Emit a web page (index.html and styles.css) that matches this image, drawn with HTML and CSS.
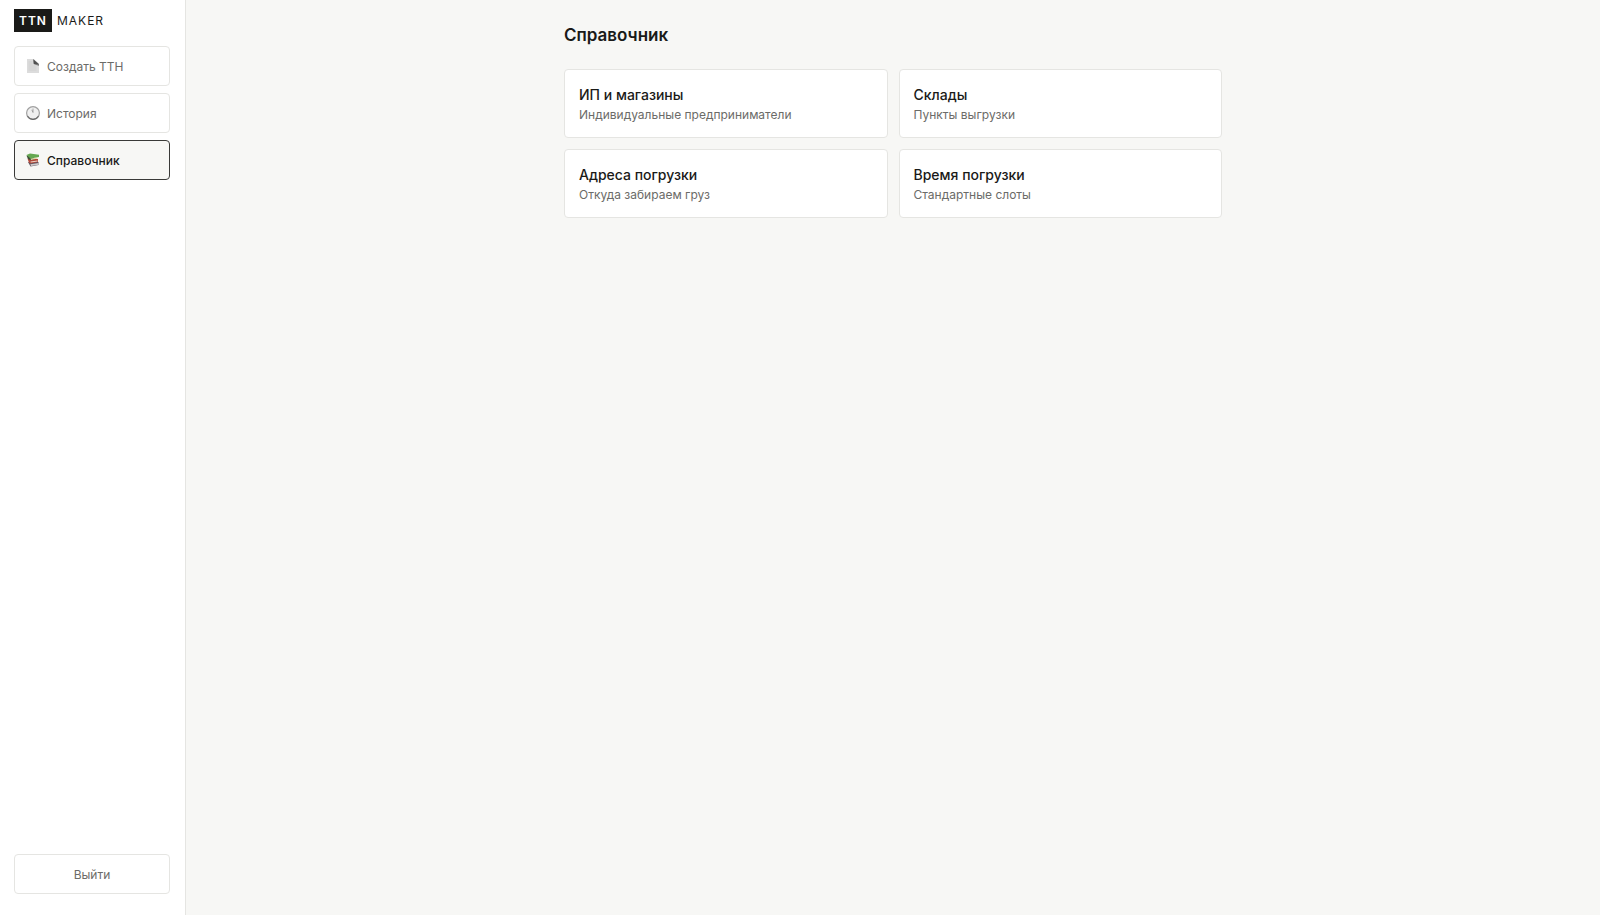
FILE: index.html
```html
<!DOCTYPE html>
<html lang="ru">
<head>
<meta charset="utf-8">
<meta name="viewport" content="width=device-width, initial-scale=1">
<title>TTN Maker</title>
<link rel="stylesheet" href="styles.css">
</head>
<body>

<aside class="sidebar">
  <a class="logo" href="#"><span class="logo-mark">TTN</span><span class="logo-text">MAKER</span></a>

  <nav class="nav">
    <button class="btn" type="button">
      <svg class="icon" viewBox="0 0 14 14" aria-hidden="true">
        <path d="M1 0h7l5 5v9H1z" fill="#dcdcdc"/>
        <path d="M2.500 3h4M2.500 5h4M2.500 7h8M2.500 9h8M2.500 11h8" stroke="#c9c9c9" stroke-width=".6"/>
        <path d="M7 0l6 5v2L7.500 5z" fill="#8a8a8a"/>
        <path d="M7.500.5L13 5.500 8 5z" fill="#505050"/>
      </svg>
      Создать ТТН
    </button>
    <button class="btn" type="button">
      <svg class="icon" viewBox="0 0 14 14" aria-hidden="true">
        <circle cx="7" cy="7" r="6.400" fill="#f0f0f0" stroke="#a0a0a0" stroke-width="1.200"/>
        <path d="M1.500 10.300a6.400 6.400 0 0 0 11 0" fill="none" stroke="#6c6c6c" stroke-width="1.200"/>
        <path d="M7 6.500V2.500M7 6.500L5.800 3.800" stroke="#8a8a8a" stroke-width=".7" fill="none"/>
      </svg>
      История
    </button>
    <button class="btn active" type="button">
      <svg class="icon" viewBox="0 0 14 14" aria-hidden="true">
        <path d="M2 9l2.500 4.500L12.500 12V9z" fill="#5d5560"/>
        <path d="M4.300 11.300l8.200-1.300v1.800L5 13z" fill="#cfc9cb"/>
        <path d="M1.500 5.500L3 9.800l1.500.7 7.500-1.500V6z" fill="#b3483a"/>
        <path d="M4.500 8.600l7-1.100v.9L4.700 9.600z" fill="#ecd2c4"/>
        <path d="M.5 2.500L2 6l2.500 1.200L8 6.500V4z" fill="#3d5038"/>
        <path d="M4.500 5.600L11.500 4.500v1L5 6.900z" fill="#e3d9a8"/>
        <path d="M.5 2L4 .5l9 1.200V4L4.500 5.500z" fill="#65a851"/>
      </svg>
      Справочник
    </button>
  </nav>

  <button class="btn logout" type="button">Выйти</button>
</aside>

<main class="main">
  <div class="content">
    <h1>Справочник</h1>
    <div class="cards">
      <a class="card" href="#">
        <span class="card-title">ИП и магазины</span>
        <span class="card-sub">Индивидуальные предприниматели</span>
      </a>
      <a class="card" href="#">
        <span class="card-title">Склады</span>
        <span class="card-sub">Пункты выгрузки</span>
      </a>
      <a class="card" href="#">
        <span class="card-title">Адреса погрузки</span>
        <span class="card-sub">Откуда забираем груз</span>
      </a>
      <a class="card" href="#">
        <span class="card-title">Время погрузки</span>
        <span class="card-sub">Стандартные слоты</span>
      </a>
    </div>
  </div>
</main>

</body>
</html>
```

FILE: styles.css
```css
* {
  box-sizing: border-box;
}

body {
  margin: 0;
  min-height: 100vh;
  display: flex;
  font-family: Inter, sans-serif;
  font-size: 12px;
  color: #1a1a18;
  background-color: #f7f7f5;
}

.sidebar {
  width: 186px;
  flex-shrink: 0;
  display: flex;
  flex-direction: column;
  padding: 9px 15px 21px 14px;
  background-color: #fff;
  border-right: 1px solid #e5e5e2;
}

.logo {
  display: flex;
  align-items: center;
  gap: 5px;
  margin-bottom: 14px;
  line-height: 23px;
  letter-spacing: 1px;
  color: #1a1a18;
  text-decoration: none;
}

.logo-mark {
  padding: 0 5px;
  font-weight: 600;
  color: #fff;
  background-color: #1a1a18;
}

.nav {
  display: flex;
  flex-direction: column;
  gap: 7px;
}

.btn {
  display: flex;
  align-items: center;
  gap: 7px;
  height: 40px;
  padding: 0 11px;
  border: 1px solid #e5e5e2;
  border-radius: 4px;
  font-family: inherit;
  font-size: 12px;
  color: #6b6b68;
  background-color: #fff;
  cursor: pointer;
}

.btn.active {
  font-weight: 500;
  color: #1a1a18;
  border-color: #3a3a38;
  background-color: #f7f7f5;
}

.icon {
  width: 14px;
  height: 14px;
}

.logout {
  justify-content: center;
  margin-top: auto;
}

.main {
  flex: 1;
  padding: 22px;
}

.content {
  max-width: 658px;
  margin: 0 auto;
}

h1 {
  margin: 0 0 20px;
  font-size: 17px;
  font-weight: 600;
  line-height: 27px;
}

.cards {
  display: grid;
  grid-template-columns: 1fr 1fr;
  gap: 11px;
}

.card {
  display: flex;
  flex-direction: column;
  padding: 15px 14px 13px;
  border: 1px solid #e5e5e2;
  border-radius: 4px;
  color: #1a1a18;
  background-color: #fff;
  text-decoration: none;
}

.card-title {
  font-size: 14px;
  font-weight: 500;
  line-height: 20px;
}

.card-sub {
  line-height: 19px;
  color: #6b6b68;
}

.btn:hover,
.card:hover {
  border-color: #3a3a38;
}
```
